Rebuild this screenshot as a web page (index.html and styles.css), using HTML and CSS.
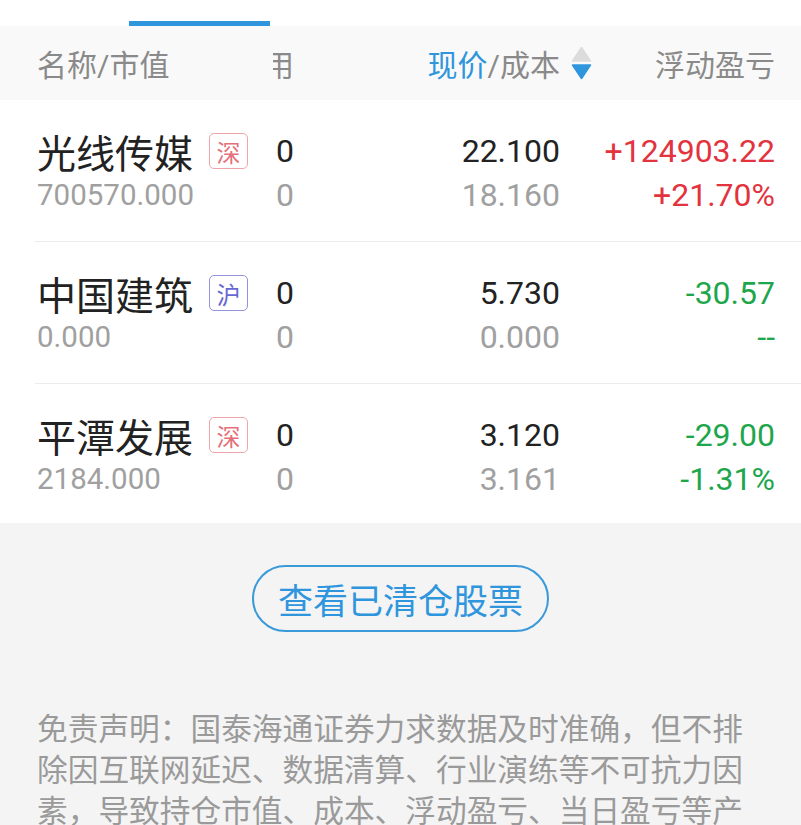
FILE: index.html
```html
<!DOCTYPE html>
<html>
<head>
    <meta charset="UTF-8" />
    <meta name="viewport" content="width=device-width, initial-scale=1.0" />
    <title>持仓</title>
    <link rel="stylesheet" href="styles.css">
</head>
<body>
    <div class="tabs">
        <span class="tab-indicator"></span>
    </div>

    <div class="table-head">
        <div class="col-name">名称/市值</div>
        <div class="col-hold"><span>持仓/可用</span></div>
        <div class="col-price">
            <span class="active">现价</span>/成本
            <svg class="sort-icon" viewBox="0 0 21 34" width="21" height="34">
                <path d="M10.5 1.5 L19.5 15 L1.5 15 Z" fill="#dcdcdc" stroke="#dcdcdc" stroke-width="1.5" stroke-linejoin="round" />
                <path d="M1.5 19 L19.5 19 L10.5 32.5 Z" fill="#2f96dd" stroke="#2f96dd" stroke-width="1.5" stroke-linejoin="round" />
            </svg>
        </div>
        <div class="col-pnl">浮动盈亏</div>
    </div>

    <div class="holdings">
        <div class="row">
            <div class="col-name">
                <div class="name">光线传媒<span class="badge sz">深</span></div>
                <div class="sub">700570.000</div>
            </div>
            <div class="col-hold">
                <div class="main">0</div>
                <div class="sub">0</div>
            </div>
            <div class="col-price">
                <div class="main">22.100</div>
                <div class="sub">18.160</div>
            </div>
            <div class="col-pnl up">
                <div class="main">+124903.22</div>
                <div class="main">+21.70%</div>
            </div>
        </div>

        <div class="row">
            <div class="col-name">
                <div class="name">中国建筑<span class="badge sh">沪</span></div>
                <div class="sub">0.000</div>
            </div>
            <div class="col-hold">
                <div class="main">0</div>
                <div class="sub">0</div>
            </div>
            <div class="col-price">
                <div class="main">5.730</div>
                <div class="sub">0.000</div>
            </div>
            <div class="col-pnl down">
                <div class="main">-30.57</div>
                <div class="main">--</div>
            </div>
        </div>

        <div class="row">
            <div class="col-name">
                <div class="name">平潭发展<span class="badge sz">深</span></div>
                <div class="sub">2184.000</div>
            </div>
            <div class="col-hold">
                <div class="main">0</div>
                <div class="sub">0</div>
            </div>
            <div class="col-price">
                <div class="main">3.120</div>
                <div class="sub">3.161</div>
            </div>
            <div class="col-pnl down">
                <div class="main">-29.00</div>
                <div class="main">-1.31%</div>
            </div>
        </div>
    </div>

    <div class="footer">
        <button class="cleared-btn">查看已清仓股票</button>
        <p class="disclaimer">免责声明：国泰海通证券力求数据及时准确，但不排除因互联网延迟、数据清算、行业演练等不可抗力因素，导致持仓市值、成本、浮动盈亏、当日盈亏等产生偏差，数据仅供参考。</p>
    </div>
</body>
</html>
```

FILE: styles.css
```css
body {
    margin: 0;
    overflow: hidden;
    background: #f4f4f4;
    font-family: Roboto, "Noto Sans CJK SC", sans-serif;
    color: #222;
}

.tabs { height: 26px; background: #fff; display: flex; align-items: flex-end; }
.tab-indicator { display: block; margin-left: 129px; width: 141px; height: 5px; background: #2f96dd; }

/* shared column grid for header and rows */
.table-head, .row {
    display: grid;
    grid-template-columns: 236px 21px 1fr 215px;
}

.table-head {
    height: 74px;
    padding: 0 26px 0 37px;
    align-items: center;
    background: #f9f9f9;
    color: #8a8a8a;
    font-size: 30px;
}
.table-head .col-price { display: flex; justify-content: flex-end; align-items: center; }
.table-head .active { color: #2f96dd; }
.sort-icon { margin-left: 11px; margin-right: -32px; flex-shrink: 0; }

.col-hold { display: flex; flex-direction: column; align-items: flex-end; overflow: hidden; }
.table-head .col-hold { flex-direction: row; justify-content: flex-end; white-space: nowrap; }
.col-price, .col-pnl { text-align: right; }

.holdings { background: #fff; }
.row {
    margin-left: 35px;
    padding: 29px 26px 24px 2px;
    border-bottom: 1px solid #ececec;
}
.row:last-child { border-bottom: none; padding-bottom: 22px; }

.name {
    display: flex;
    align-items: center;
    height: 44px;
    font-size: 39px;
    white-space: nowrap;
}
.badge {
    display: inline-flex;
    align-items: center;
    justify-content: center;
    box-sizing: border-box;
    width: 39px;
    height: 36px;
    margin-left: 16px;
    border: 1px solid;
    border-radius: 5px;
    font-size: 24px;
}
.badge.sz { color: #e4707a; border-color: #eea6ab; }
.badge.sh { color: #6767d2; border-color: #9292dd; }

.main { font-size: 32px; line-height: 44px; }
.sub { font-size: 32px; line-height: 44px; color: #a0a0a0; }
.col-name .sub { font-size: 29.5px; }
.up { color: #e2333f; }
.down { color: #1ea64c; }

.footer { padding: 42px 37px 0; }
.cleared-btn {
    display: block;
    box-sizing: border-box;
    width: 297px;
    height: 67px;
    margin: 0 auto;
    padding: 0;
    border: 2px solid #3a9ad9;
    border-radius: 34px;
    background: transparent;
    color: #2f96dd;
    font-family: Roboto, "Noto Sans CJK SC", sans-serif;
    font-size: 35px;
}
.disclaimer {
    margin: 77px 0 0;
    font-size: 30.7px;
    line-height: 41px;
    color: #9a9a9a;
}
```
